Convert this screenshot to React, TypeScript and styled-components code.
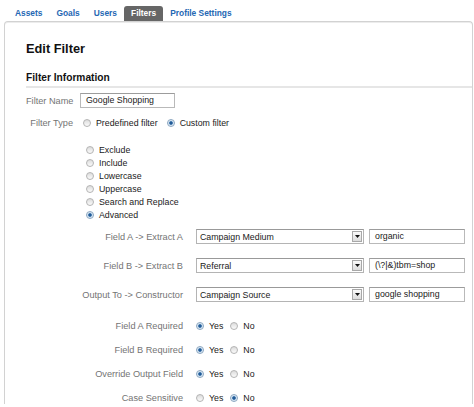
import React from "react";
import styled, { createGlobalStyle } from "styled-components";

const Global = createGlobalStyle`
  html, body { margin: 0; padding: 0; background: #fff; }
  body { font-family: "Liberation Sans", Arial, sans-serif; color: #222; }
`;

const Page = styled.div`
  width: 474px;
  height: 407px;
  overflow: hidden;
  display: flex;
  flex-direction: column;
`;

const TabBar = styled.nav`
  display: flex;
  align-items: flex-end;
  height: 21px;
  padding-left: 8px;
`;

const Tab = styled.span<{ $active?: boolean }>`
  height: 15px;
  line-height: 15px;
  padding: 0 7px;
  font-size: 8.4px;
  font-weight: bold;
  color: ${(p) => (p.$active ? "#fff" : "#2467b3")};
  background: ${(p) => (p.$active ? "#666" : "transparent")};
  border-radius: 3px 3px 0 0;
`;

const Panel = styled.section`
  margin: 0 1px 0 4px;
  height: 382px;
  border: 1px solid #d2d2d2;
  border-bottom: none;
  border-radius: 4px 4px 0 0;
  box-shadow: inset 0 1px 0 #ececec;
  padding-left: 21px;
`;

const Title = styled.h1`
  margin: 0;
  padding-top: 19px;
  font-size: 12.8px;
  line-height: 16px;
  font-weight: bold;
  color: #111;
`;

const SectionHeader = styled.h2`
  margin: 14px 0 0;
  font-size: 10.2px;
  line-height: 13px;
  font-weight: bold;
  color: #111;
  padding-bottom: 2px;
  border-bottom: 2px solid #e6e6e6;
`;

const FormRow = styled.div<{ $top: number }>`
  display: grid;
  grid-template-columns: 47px auto;
  column-gap: 7px;
  align-items: center;
  height: 14px;
  margin-top: ${(p) => p.$top}px;
`;

const Label = styled.label`
  text-align: right;
  font-size: 9.2px;
  color: #747474;
  white-space: nowrap;
`;

const TextInput = styled.div<{ $w: number }>`
  box-sizing: border-box;
  width: ${(p) => p.$w}px;
  height: 15px;
  line-height: 13px;
  border: 1px solid #b9b9b9;
  border-top-color: #9c9c9c;
  padding-left: 5px;
  font-size: 8.8px;
  color: #1a1a1a;
  background: #fff;
  white-space: nowrap;
  overflow: hidden;
`;

const RadioGroup = styled.div<{ $compact?: boolean }>`
  display: flex;
  align-items: center;
  gap: ${(p) => (p.$compact ? 7 : 9)}px;
  padding-left: ${(p) => (p.$compact ? 0 : 3)}px;
`;

const RadioOption = styled.span`
  display: inline-flex;
  align-items: center;
  gap: 5px;
  font-size: 8.8px;
  color: #1a1a1a;
  white-space: nowrap;
`;

const RadioDot = styled.span<{ $on?: boolean }>`
  box-sizing: border-box;
  width: 8px;
  height: 8px;
  border-radius: 50%;
  border: 1px solid ${(p) => (p.$on ? "#8aa6c0" : "#b4b4b4")};
  background: ${(p) =>
    p.$on
      ? "radial-gradient(circle at 50% 50%, #1b4f86 0, #2a66a3 1.4px, #cfe0f0 2.2px, #f4f8fb 3.5px)"
      : "linear-gradient(#dcdcdc, #fbfbfb)"};
`;

const TypeList = styled.div`
  margin: 13px 0 0 57px;
  display: flex;
  flex-direction: column;
`;

const TypeItem = styled.div`
  height: 13px;
  display: flex;
  align-items: center;
  padding-left: 3px;
`;

const AdvancedGrid = styled.div<{ $top: number; $gap: number; $h: number }>`
  display: grid;
  grid-template-columns: 103px auto;
  grid-auto-rows: ${(p) => p.$h}px;
  column-gap: 13px;
  row-gap: ${(p) => p.$gap}px;
  align-items: center;
  margin: ${(p) => p.$top}px 0 0 54px;
`;

const Controls = styled.div`
  display: flex;
  align-items: center;
  gap: 5px;
`;

const Select = styled.div`
  box-sizing: border-box;
  width: 168px;
  height: 15px;
  border: 1px solid #b4b4b4;
  border-top-color: #999;
  display: flex;
  align-items: center;
  justify-content: space-between;
  padding: 0 1px 0 3px;
  font-size: 8.8px;
  color: #1a1a1a;
  background: #fff;
`;

const DropButton = styled.span`
  box-sizing: border-box;
  width: 10px;
  height: 11px;
  border: 1px solid #a8a8a8;
  background: linear-gradient(#fafafa, #dcdcdc);
  display: flex;
  align-items: center;
  justify-content: center;
`;

const Arrow = () => (
  <svg width="5" height="3" viewBox="0 0 5 3">
    <path d="M0 0h5L2.5 3z" fill="#111" />
  </svg>
);

const Radio = ({ on, children }: { on?: boolean; children: React.ReactNode }) => (
  <RadioOption>
    <RadioDot $on={on} />
    {children}
  </RadioOption>
);

const types = [
  { t: "Exclude" },
  { t: "Include" },
  { t: "Lowercase" },
  { t: "Uppercase" },
  { t: "Search and Replace" },
  { t: "Advanced", on: true },
];

const fields = [
  { l: "Field A -> Extract A", s: "Campaign Medium", v: "organic" },
  { l: "Field B -> Extract B", s: "Referral", v: "(\\?|&)tbm=shop" },
  { l: "Output To -> Constructor", s: "Campaign Source", v: "google shopping" },
];

const flags = [
  { l: "Field A Required", yes: true },
  { l: "Field B Required", yes: true },
  { l: "Override Output Field", yes: true },
  { l: "Case Sensitive", yes: false },
];

export default function App() {
  return (
    <Page>
      <Global />
      <TabBar>
        <Tab>Assets</Tab>
        <Tab>Goals</Tab>
        <Tab>Users</Tab>
        <Tab $active>Filters</Tab>
        <Tab>Profile Settings</Tab>
      </TabBar>
      <Panel>
        <Title>Edit Filter</Title>
        <SectionHeader>Filter Information</SectionHeader>
        <FormRow $top={5}>
          <Label>Filter Name</Label>
          <TextInput $w={95}>Google Shopping</TextInput>
        </FormRow>
        <FormRow $top={9}>
          <Label>Filter Type</Label>
          <RadioGroup>
            <Radio>Predefined filter</Radio>
            <Radio on>Custom filter</Radio>
          </RadioGroup>
        </FormRow>
        <TypeList>
          {types.map((x) => (
            <TypeItem key={x.t}>
              <Radio on={x.on}>{x.t}</Radio>
            </TypeItem>
          ))}
        </TypeList>
        <AdvancedGrid $top={8} $gap={14} $h={15}>
          {fields.map((f) => (
            <React.Fragment key={f.l}>
              <Label>{f.l}</Label>
              <Controls>
                <Select>
                  <span>{f.s}</span>
                  <DropButton>
                    <Arrow />
                  </DropButton>
                </Select>
                <TextInput $w={96}>{f.v}</TextInput>
              </Controls>
            </React.Fragment>
          ))}
        </AdvancedGrid>
        <AdvancedGrid $top={17} $gap={11} $h={13}>
          {flags.map((f) => (
            <React.Fragment key={f.l}>
              <Label>{f.l}</Label>
              <RadioGroup $compact>
                <Radio on={f.yes}>Yes</Radio>
                <Radio on={!f.yes}>No</Radio>
              </RadioGroup>
            </React.Fragment>
          ))}
        </AdvancedGrid>
      </Panel>
    </Page>
  );
}
